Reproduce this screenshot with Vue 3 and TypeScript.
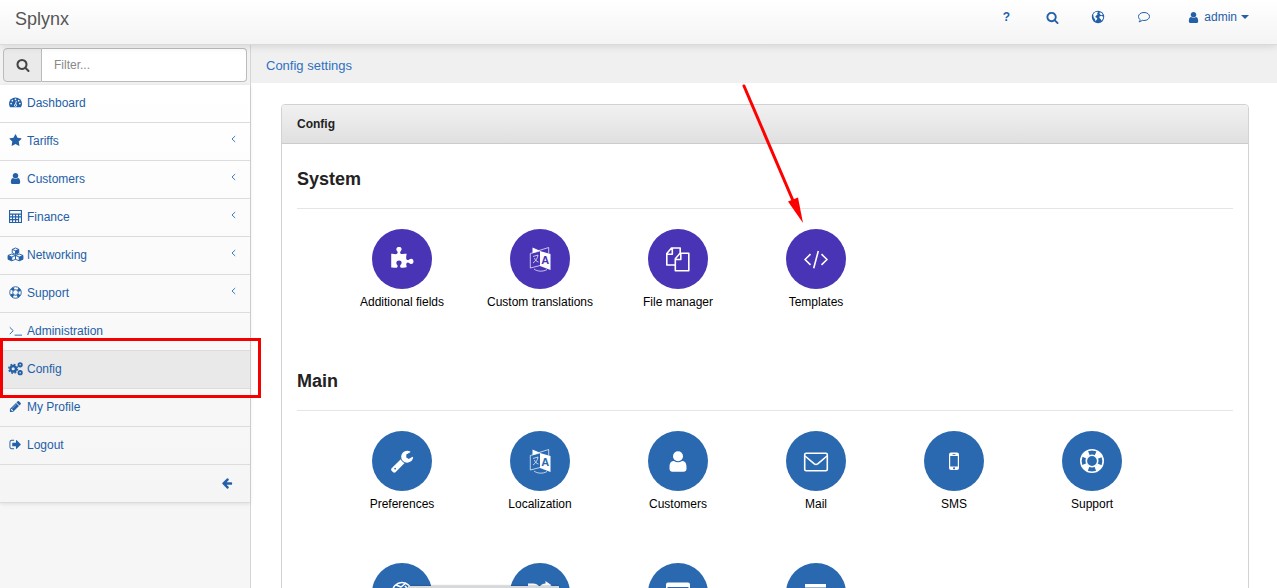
<script setup lang="ts">
import { ref } from 'vue'

interface MenuItem { label: string; icon: string; expandable?: boolean; active?: boolean }
interface Tile { label: string; icon: string }
interface Section { title: string; tone: string; tiles: Tile[] }

const filter = ref('')

const menu: MenuItem[] = [
  { label: 'Dashboard', icon: 'gauge' },
  { label: 'Tariffs', icon: 'star', expandable: true },
  { label: 'Customers', icon: 'user', expandable: true },
  { label: 'Finance', icon: 'calculator', expandable: true },
  { label: 'Networking', icon: 'cubes', expandable: true },
  { label: 'Support', icon: 'ring', expandable: true },
  { label: 'Administration', icon: 'terminal' },
  { label: 'Config', icon: 'cogs', active: true },
  { label: 'My Profile', icon: 'pencil' },
  { label: 'Logout', icon: 'signout' },
]

const sections: Section[] = [
  {
    title: 'System',
    tone: 'violet',
    tiles: [
      { label: 'Additional fields', icon: 'puzzle' },
      { label: 'Custom translations', icon: 'translate' },
      { label: 'File manager', icon: 'files' },
      { label: 'Templates', icon: 'code' },
    ],
  },
  {
    title: 'Main',
    tone: 'blue',
    tiles: [
      { label: 'Preferences', icon: 'wrench' },
      { label: 'Localization', icon: 'translate' },
      { label: 'Customers', icon: 'person' },
      { label: 'Mail', icon: 'mail' },
      { label: 'SMS', icon: 'phone' },
      { label: 'Support', icon: 'buoy' },
      { label: '', icon: 'world' },
      { label: '', icon: 'shuffle' },
      { label: '', icon: 'card' },
      { label: '', icon: 'list' },
    ],
  },
]

const solid: Record<string, string> = {
  star: 'M1728 647q0 22-26 48l-363 354 86 500q1 7 1 20 0 21-10.5 35.5t-30.5 14.5q-19 0-40-12l-449-236-449 236q-22 12-40 12-21 0-31.5-14.5t-10.5-35.5q0-6 2-20l86-500-364-354q-25-27-25-48 0-37 56-46l502-73 225-455q19-41 49-41t49 41l225 455 502 73q56 9 56 46z',
  user: 'M1536 1399q0 109-62.500 187t-150.500 78h-854q-88 0-150.500-78t-62.500-187q0-85 8.500-160.500t31.500-152 58.500-131 94-89 134.500-34.500q131 128 313 128t313-128q76 0 134.500 34.500t94 89 58.500 131 31.500 152 8.500 160.500zm-256-887q0 159-112.500 271.500t-271.500 112.500-271.500-112.500-112.500-271.500 112.500-271.500 271.500-112.500 271.500 112.500 112.500 271.500z',
  pencil: 'M491 1536l91-91-235-235-91 91v107h128v128h107zm523-928q0-22-22-22-10 0-17 7l-542 542q-7 7-7 17 0 22 22 22 10 0 17-7l542-542q7-7 7-17zm-54-192l416 416-832 832h-416v-416zm683 96q0 53-37 90l-166 166-416-416 166-165q36-38 90-38 53 0 91 38l235 234q37 39 37 91z',
  signout: 'M704 1440q0 4 1 20t.5 26.500-3 23.500-10 19.500-20.500 6.500h-320q-119 0-203.500-84.500t-84.500-203.500v-704q0-119 84.500-203.500t203.500-84.500h320q13 0 22.500 9.500t9.500 22.500q0 4 1 20t.5 26.500-3 23.500-10 19.500-20.500 6.500h-320q-66 0-113 47t-47 113v704q0 66 47 113t113 47h312l11.500 1 11.500 3 8 5.500 7 9 2 13.500zm928-544q0 26-19 45l-544 544q-19 19-45 19t-45-19-19-45v-288h-448q-26 0-45-19t-19-45v-384q0-26 19-45t45-19h448v-288q0-26 19-45t45-19 45 19l544 544q19 19 19 45z',
  puzzle: 'M1755 1083q0 81-44.500 135t-123.500 54q-41 0-77.500-17.500t-59-38-56.500-38-71-17.500q-110 0-110 124 0 39 16 115t15 115v5q-22 0-33 1-34 3-97.500 11.500t-115.500 13.500-98 5q-61 0-103-26.500t-42-83.500q0-37 17.500-71t38-56.500 38-59 17.500-77.500q0-79-54-123.500t-135-44.500q-84 0-143 45.500t-59 127.500q0 43 15 83t33.500 64.500 33.500 53 15 50.500q0 45-46 89-37 35-117 35-95 0-245-24-9-2-27.500-4t-27.500-4l-13-2q-1 0-3-1-2 0-2-1v-1024q2 1 17.500 3.500t34 5 21.500 3.500q150 24 245 24 80 0 117-35 46-44 46-89 0-22-15-50.500t-33.500-53-33.500-64.500-15-83q0-82 59-127.500t144-45.500q80 0 134 44.500t54 123.500q0 41-17.500 77.500t-38 59-38 56.500-17.500 71q0 57 42 83.500t103 26.500q64 0 180-15t163-17v2q-1 2-3.500 17.500t-5 34-3.500 21.500q-24 150-24 245 0 80 35 117 44 46 89 46 22 0 50.500-15t53-33.500 64.500-33.500 83-15q82 0 127.500 59t45.500 143z',
  wrench: 'M448 1472q0-26-19-45t-45-19-45 19-19 45 19 45 45 19 45-19 19-45zm644-420l-682 682q-37 37-90 37-52 0-91-37l-106-108q-38-36-38-90 0-53 38-91l681-681q39 98 114.500 173.500t173.500 114.500zm634-435q0 39-23 106-47 134-164.500 217.500t-258.500 83.500q-185 0-316.500-131.500t-131.500-316.500 131.500-316.500 316.500-131.500q58 0 121.500 16.500t107.500 46.500q16 11 16 28t-16 28l-293 169v224l193 107q5-3 79-48.500t135.500-81 70.500-35.500q15 0 23.500 10t8.500 25z',
}
const searchPath = 'M1216 832q0-185-131.500-316.500t-316.500-131.500-316.500 131.500-131.500 316.500 131.500 316.500 316.500 131.500 316.500-131.500 131.500-316.500zm512 832q0 52-38 90t-90 38q-54 0-90-38l-343-342q-179 124-399 124-143 0-273.500-55.500t-225-150-150-225-55.500-273.500 55.500-273.500 150-225 225-150 273.500-55.500 273.500 55.500 225 150 150 225 55.500 273.500q0 220-124 399l343 343q37 37 37 90z'
const arrowPath = 'M1664 896v128q0 53-32.500 90.500t-84.500 37.500h-704l293 294q38 36 38 90t-38 90l-75 76q-37 37-90 37-52 0-91-37l-651-652q-37-37-37-90 0-52 37-91l651-650q38-38 91-38 52 0 90 38l75 74q38 38 38 91t-38 91l-293 293h704q52 0 84.500 37.500t32.500 90.500z'
</script>

<template>
  <div class="shell">
    <header class="topbar">
      <a href="#" class="brand">Splynx</a>
      <nav class="tools">
        <a href="#" class="tool help">?</a>
        <a href="#" class="tool"><svg class="ico" viewBox="0 0 1792 1792"><path :d="searchPath" /></svg></a>
        <a href="#" class="tool">
          <svg class="globe" viewBox="0 0 14 14">
            <circle cx="7" cy="7" r="6.200" />
            <path class="land" d="M2.200 4.200L4 2.300l2.300-.5.700 1-1 .8.600.9-1.600 1.200-.8 1.200 1.800 1 .3 1.200-1.300 1.400-.4 1L4 9.200 2.600 7.300zM8.800 2.300l1.800.7 1.200 1.800-1.300.5-1-.6-.9-.9zM8.600 6.300l2-.3 1.600.8-.3 2-1.500 2-.7-1.800-1.300-.9z" />
          </svg>
        </a>
        <a href="#" class="tool">
          <svg class="globe line" viewBox="0 0 14 14"><path d="M7 2.500c3.200 0 5.500 1.700 5.500 4s-2.300 4-5.500 4c-.6 0-1.200 0-1.700-.2-.9.900-1.900 1.300-3.300 1.500.8-.7 1.200-1.300 1.200-2.200C2 8.900 1.500 7.800 1.500 6.500c0-2.300 2.300-4 5.500-4z" /></svg>
        </a>
        <a href="#" class="tool account">
          <svg class="ico" viewBox="0 0 1792 1792"><path :d="solid.user" /></svg>
          <span>admin</span>
          <svg class="caret" viewBox="0 0 8 4"><path d="M0 0h8L4 4z" /></svg>
        </a>
      </nav>
    </header>

    <div class="body">
      <aside class="sidebar">
        <label class="filter">
          <span class="addon"><svg class="lens" viewBox="0 0 1792 1792"><path :d="searchPath" /></svg></span>
          <input v-model="filter" type="text" placeholder="Filter..." />
        </label>
        <nav class="menu">
          <a v-for="item in menu" :key="item.label" href="#" class="row" :class="{ active: item.active }">
            <svg v-if="solid[item.icon]" class="ico" viewBox="0 0 1792 1792"><path :d="solid[item.icon]" /></svg>
            <svg v-else class="ico" viewBox="0 0 14 14">
              <template v-if="item.icon === 'gauge'">
                <path d="M0 8a7 6.500 0 0 1 14 0c0 1.700-.5 3-1.200 4.200H1.200C.5 11 0 9.700 0 8z" />
                <g class="knock"><circle cx="2.300" cy="8.200" r=".9" /><circle cx="3.600" cy="5" r=".9" /><circle cx="7" cy="3.600" r=".9" /><circle cx="10.400" cy="5" r=".9" /><circle cx="11.700" cy="8.200" r=".9" /><circle cx="7" cy="10" r="1.500" /><path d="M6.500 9l1-4 .8.300-.8 4z" /></g>
                <circle cx="7" cy="10" r=".8" />
              </template>
              <template v-else-if="item.icon === 'calculator'">
                <path fill-rule="evenodd" d="M0 0h14v14H0zM1.200 1.200v2.600h11.600V1.200zM1.200 5v1.800h2V5zm3.200 0v1.800h2.100V5zm3.300 0v1.800h2V5zm3.200 0v1.800h1.900V5zM1.200 8v1.800h2V8zm3.200 0v1.800h2.100V8zm3.300 0v1.800h2V8zm3.200 0v4.800h1.900V8zM1.200 11v1.800h2V11zm3.200 0v1.800h2.100V11zm3.300 0v1.800h2V11z" />
              </template>
              <g v-else-if="item.icon === 'cubes'" class="pen">
                <path d="M7 0l3.500 1.500v3.700L7 6.800 3.500 5.200V1.500zM3.500 1.500L7 3l3.500-1.500M7 3v3.800M3 6.500l4 1.500v4.200l-4 1.600-4-1.600V8zM-1 8l4 1.700L7 8M3 9.700v4M11 6.500L15 8v4.200l-4 1.600-4-1.600V8zM7 8l4 1.700L15 8M11 9.700v4" />
                <path class="face" d="M7 3l3.500-1.500v3.700L7 6.800zM-1 8l4 1.700v4l-4-1.500zM11 9.700L15 8v4.200l-4 1.500z" />
              </g>
              <g v-else-if="item.icon === 'ring'" class="pen">
                <circle cx="7" cy="7" r="6.200" /><circle cx="7" cy="7" r="3" />
                <circle class="bands" cx="7" cy="7" r="4.600" />
              </g>
              <g v-else-if="item.icon === 'terminal'" class="pen"><path d="M.8 3.500L4.500 7.200.8 11M6 12h8" /></g>
              <g v-else class="pen">
                <circle class="gear" cx="4.500" cy="7.300" r="3" /><circle class="teeth" cx="4.500" cy="7.300" r="4.700" />
                <circle class="mini" cx="12" cy="3" r="1.800" /><circle class="mini" cx="12" cy="11.500" r="1.800" />
              </g>
            </svg>
            <span class="text">{{ item.label }}</span>
            <svg v-if="item.expandable" class="chevron" viewBox="0 0 5 8"><path d="M4.200 1L1 4l3.200 3" /></svg>
          </a>
          <button type="button" class="row collapse"><svg class="back" viewBox="0 0 1792 1792"><path :d="arrowPath" /></svg></button>
        </nav>
        <div class="highlight"></div>
      </aside>

      <main class="content">
        <div class="crumbs"><a href="#">Config settings</a></div>
        <section class="panel">
          <h1 class="panel-title">Config</h1>
          <div class="panel-body">
            <section v-for="s in sections" :key="s.title" class="group">
              <h2>{{ s.title }}</h2>
              <div class="tiles">
                <a v-for="t in s.tiles" :key="t.icon" href="#" class="tile">
                  <span class="disc" :class="s.tone">
                    <svg v-if="solid[t.icon]" class="glyph" viewBox="0 0 1792 1792"><path :d="solid[t.icon]" /></svg>
                    <svg v-else class="art" viewBox="0 0 28 28">
                      <g v-if="t.icon === 'translate'">
                        <path d="M6.500 2.500l7.500 3.200-7.500 2.500zM14 6l10.500 3v16L14 21z" />
                        <path class="thin" d="M14 6L4.300 8.500V23L14 20.500M13 5.500L22.700 2.500v6M8 24c3 2.500 9 3 13 .5M7 11.500l5-1.500c-.5 3-2 6-5 8M8.500 13c.5 2 2 3.500 4 4" />
                        <text class="letter" :class="s.tone" x="19.300" y="19" text-anchor="middle">A</text>
                      </g>
                      <g v-else-if="t.icon === 'files'" class="stroke"><path d="M11 20H2.800V8.500L7.500 3h8.700v5.500M2.800 9.300h5.500V3M11.300 13.800L16 8.300h8.800v17.400H11.300zM11.300 14.500h5.500V8.300" /></g>
                      <g v-else-if="t.icon === 'code'" class="stroke"><path d="M8.500 9.200L3 14.500l5.500 5.300M19.500 9.200l5.500 5.300-5.500 5.300M16.300 6l-4.600 17.200" /></g>
                      <g v-else-if="t.icon === 'person'">
                        <circle cx="14" cy="9.200" r="5" />
                        <path d="M5.500 20.500c0-4.500 1.500-6.500 4.500-6.500 2.500 1.800 5.500 1.800 8 0 3 0 4.500 2 4.500 6.500v1.200c0 2-1.200 3-3 3h-11c-1.800 0-3-1-3-3z" />
                      </g>
                      <g v-else-if="t.icon === 'mail'" class="stroke"><rect x="2.700" y="6.200" width="22.600" height="17.600" rx="1.500" /><path d="M3 9l9 7.700c1.300 1 2.700 1 4 0L25 9" /></g>
                      <path v-else-if="t.icon === 'phone'" fill-rule="evenodd" d="M11 5.500h6a2 2 0 0 1 2 2V21a2 2 0 0 1-2 2h-6a2 2 0 0 1-2-2V7.500a2 2 0 0 1 2-2zM10.200 9v10.500h7.600V9zM12.500 7v.7h3V7zM14 20.300a1 1 0 1 0 .1 0z" />
                      <g v-else-if="t.icon === 'buoy'" class="stroke">
                        <circle cx="14" cy="14" r="11.200" /><circle cx="14" cy="14" r="5.700" />
                        <circle class="buoy-bands" cx="14" cy="14" r="8.600" />
                      </g>
                      <g v-else-if="t.icon === 'world'" class="stroke"><circle cx="14" cy="13" r="9.500" /><path d="M8 6l5 2 5-4M17 7l3 3" /></g>
                      <path v-else-if="t.icon === 'shuffle'" d="M2 4.500h5c3 0 4.500 1 6.500 3 2-2 3.500-3 6-3V2l6 4.200-6 4.300V8c-4 0-5 4-7 7H2z" />
                      <path v-else-if="t.icon === 'card'" fill-rule="evenodd" d="M4 3.500h20a2 2 0 0 1 2 2v15H2v-15a2 2 0 0 1 2-2zM3.500 8v2h21V8z" />
                      <path v-else d="M3 5h21v3.500H3zM3 11h21v3H3zM3 17h21v3H3z" />
                    </svg>
                  </span>
                  <span class="caption">{{ t.label }}</span>
                </a>
              </div>
            </section>
          </div>
        </section>
      </main>
    </div>

    <svg class="pointer" viewBox="0 0 62 140"><path class="shaft" d="M2 2l50 117" /><path d="M46 117.500L56 113.500l5 25.500z" /></svg>
    <div class="status"></div>
  </div>
</template>

<style>
html,
body {
  margin: 0;
  overflow: hidden;
}
</style>

<style scoped>
* {
  box-sizing: border-box;
}
.shell {
  position: relative;
  display: flex;
  flex-direction: column;
  height: 100vh;
  overflow: hidden;
  font: 12px/18px "Liberation Sans", Arial, sans-serif;
  color: #222;
  background: #fff;
}
a {
  color: #2460a7;
  text-decoration: none;
}
svg {
  display: block;
  flex: none;
  fill: currentColor;
}
.topbar {
  position: relative;
  z-index: 1;
  display: flex;
  flex: none;
  justify-content: space-between;
  height: 45px;
  padding: 0 28px 0 15px;
  background: linear-gradient(#fff, #f4f4f4);
  border-bottom: 1px solid #dadada;
  box-shadow: 0 1px 8px rgba(0, 0, 0, 0.13);
}
.brand {
  font-size: 18px;
  line-height: 38px;
  color: #555;
}
.tools {
  display: flex;
  align-items: center;
  height: 34px;
  gap: 32px;
}
.tool {
  display: flex;
  align-items: center;
  justify-content: center;
  min-width: 14px;
}
.help {
  font-weight: bold;
}
.account {
  gap: 4px;
  margin-left: 4px;
}
.globe {
  width: 14px;
  height: 14px;
}
.land {
  fill: #fff;
}
.line {
  fill: none;
  stroke: currentColor;
}
.caret {
  width: 8px;
  height: 4px;
}
.ico {
  width: 13px;
  height: 13px;
  overflow: visible;
}
.body {
  display: flex;
  flex: 1;
  min-height: 0;
}
.sidebar {
  position: relative;
  flex: none;
  width: 251px;
  background: #f6f6f6;
  border-right: 1px solid #d5d5d5;
}
.filter {
  display: flex;
  height: 40px;
  padding: 3px;
  background: #f2f2f2;
}
.addon {
  display: flex;
  align-items: center;
  justify-content: center;
  width: 39px;
  background: #eaeaea;
  border: 1px solid #bbb;
  border-radius: 4px 0 0 4px;
  color: #444;
}
.lens {
  width: 14px;
  height: 14px;
}
.filter input {
  flex: 1;
  min-width: 0;
  padding: 0 12px;
  font: inherit;
  color: #555;
  background: #fff;
  border: 1px solid #bbb;
  border-left: 0;
  border-radius: 0 4px 4px 0;
  outline: 0;
}
.filter input::placeholder {
  color: #888;
  opacity: 1;
}
.menu {
  background: linear-gradient(#fff, #f5f5f5);
  box-shadow: 0 1px 4px rgba(0, 0, 0, 0.1);
}
.row {
  display: flex;
  align-items: center;
  width: 100%;
  height: 38px;
  padding: 0 14px 2px 9px;
  border: 0;
  border-bottom: 1px solid #dcdcdc;
}
.active {
  background: #e9e9e9;
}
.text {
  flex: 1;
  margin-left: 5px;
}
.chevron {
  width: 5px;
  height: 8px;
  margin-bottom: 4px;
  fill: none;
  stroke: #3f7fbd;
}
.collapse {
  justify-content: flex-end;
  padding-right: 17px;
  background: none;
  color: #2460a7;
}
.back {
  width: 12px;
  height: 12px;
}
.pen {
  fill: none;
  stroke: currentColor;
}
.knock {
  fill: #fff;
}
.face {
  fill: currentColor;
  stroke: none;
}
.mini {
  fill: none;
  stroke-width: 2;
}
.bands {
  stroke-width: 3;
  stroke-dasharray: 3 4.230;
  stroke-dashoffset: -2.100;
}
.gear {
  stroke-width: 2.600;
}
.teeth {
  stroke-width: 1.600;
  stroke-dasharray: 2 1.691;
}
.highlight {
  position: absolute;
  z-index: 3;
  top: 293px;
  left: 0;
  width: 261px;
  height: 60px;
  border: 3px solid #f30000;
}
.content {
  flex: 1;
  min-width: 0;
}
.crumbs {
  height: 38px;
  padding: 0 15px;
  font-size: 13px;
  line-height: 41px;
  background: #f0f0f0;
}
.crumbs a {
  color: #2f71c2;
}
.panel {
  margin: 21px 28px 0 30px;
  border: 1px solid #d2d2d2;
  border-radius: 4px;
}
.panel-title {
  height: 39px;
  margin: 0;
  padding: 0 15px;
  font-size: 12px;
  line-height: 38px;
  background: linear-gradient(#f1f1f1, #e0e0e0);
  border-bottom: 1px solid #ccc;
  border-radius: 3px 3px 0 0;
}
.panel-body {
  padding: 0 15px;
}
.group h2 {
  height: 65px;
  margin: 0;
  padding-top: 24px;
  font-size: 18px;
  line-height: 22px;
  border-bottom: 1px solid #e5e5e5;
}
.tiles {
  display: grid;
  grid-template-columns: repeat(6, 1fr);
  row-gap: 15px;
  padding: 20px 72px 20px 36px;
}
.tile {
  display: flex;
  flex-direction: column;
  align-items: center;
  height: 117px;
  gap: 4px;
  color: #000;
  white-space: nowrap;
}
.group:first-child .tiles {
  padding-bottom: 0;
}
.disc {
  display: flex;
  align-items: center;
  justify-content: center;
  width: 60px;
  height: 60px;
  border-radius: 50%;
  color: #fff;
}
.disc.violet {
  background: #4a34b6;
}
.disc.blue {
  background: #2a69b0;
}
.glyph {
  width: 24px;
  height: 24px;
}
.art {
  width: 28px;
  height: 28px;
}
.stroke {
  fill: none;
  stroke: #fff;
  stroke-width: 1.600;
  stroke-linejoin: round;
}
.thin {
  fill: none;
  stroke: #fff;
  stroke-width: 0.700;
}
.letter {
  font: bold 11px "Liberation Sans", sans-serif;
}
.letter.violet {
  fill: #4a34b6;
}
.letter.blue {
  fill: #2a69b0;
}
.buoy-bands {
  stroke-width: 5;
  stroke-dasharray: 6.500 7.009;
  stroke-dashoffset: -3.500;
}
.caption {
  font-size: 12px;
}
.pointer {
  position: absolute;
  z-index: 3;
  top: 84px;
  left: 742px;
  width: 62px;
  height: 140px;
  fill: #f00;
}
.shaft {
  stroke: #f00;
  stroke-width: 3;
  stroke-linecap: round;
}
.status {
  position: absolute;
  bottom: 0;
  left: 408px;
  width: 151px;
  height: 2px;
  background: #d4d8da;
  box-shadow: 0 0 2px rgba(0, 0, 0, 0.5);
}
</style>
